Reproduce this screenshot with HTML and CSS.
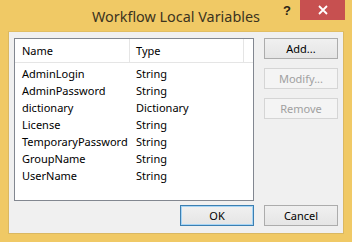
FILE: index.html
```html
<!DOCTYPE html>
<html lang="en">
<head>
    <meta charset="UTF-8">
    <title>Workflow Local Variables</title>
    <link rel="stylesheet" href="styles.css">
</head>
<body>
    <div class="window">
        <div class="titlebar">
            <div class="title">Workflow Local Variables</div>
            <div class="title-buttons">
                <span class="help">?</span>
                <span class="close">
                    <svg width="10" height="10" viewBox="0 0 10 10"><path d="M1 1 L9 9 M9 1 L1 9" stroke="#fff" stroke-width="1.8"/></svg>
                </span>
            </div>
        </div>
        <div class="client">
            <div class="listview">
                <div class="lv-header">
                    <div class="col-name">Name</div>
                    <div class="col-type">Type</div>
                    <div class="col-rest"></div>
                </div>
                <div class="lv-rows">
                    <div class="lv-row"><div class="col-name">AdminLogin</div><div class="col-type">String</div></div>
                    <div class="lv-row"><div class="col-name">AdminPassword</div><div class="col-type">String</div></div>
                    <div class="lv-row"><div class="col-name">dictionary</div><div class="col-type">Dictionary</div></div>
                    <div class="lv-row"><div class="col-name">License</div><div class="col-type">String</div></div>
                    <div class="lv-row"><div class="col-name">TemporaryPassword</div><div class="col-type">String</div></div>
                    <div class="lv-row"><div class="col-name">GroupName</div><div class="col-type">String</div></div>
                    <div class="lv-row"><div class="col-name">UserName</div><div class="col-type">String</div></div>
                </div>
            </div>
            <div class="side-buttons">
                <button class="btn">Add...</button>
                <button class="btn" disabled>Modify...</button>
                <button class="btn" disabled>Remove</button>
            </div>
            <button class="btn default ok">OK</button>
            <button class="btn">Cancel</button>
        </div>
    </div>
</body>
</html>
```
FILE: styles.css
```css
* { box-sizing: border-box; }
body { margin: 0; font-family: "Noto Sans", "Open Sans", sans-serif; }
.window { width: 352px; height: 242px; background-color: #f0c965; padding: 0 8px 8px; display: flex; flex-direction: column; }
.titlebar { height: 31px; position: relative; }
.title { text-align: center; font-size: 14.4px; color: #3c3320; line-height: 31px; padding-top: 1px; }
.title-buttons { position: absolute; top: 0; right: -1px; display: flex; align-items: flex-start; }
.help { font-family: "Liberation Sans", sans-serif; font-weight: bold; font-size: 13px; color: #2b2416; width: 26px; text-align: center; line-height: 22px; }
.close { width: 45px; height: 20px; background-color: #c75050; display: flex; align-items: center; justify-content: center; }

.client { flex: 1; background-color: #f0f0f0; border: 1px solid #dab862; border-top-color: #e2be62; display: grid; grid-template-columns: 240px 74px; grid-template-rows: 163px 21px; column-gap: 10px; row-gap: 4px; padding: 6px 6px 0 5px; align-content: start; }

.listview { background-color: #fff; border: 1px solid #828790; font-size: 11px; color: #000; }
.lv-header { display: flex; height: 24px; border-bottom: 1px solid #e5e5e5; }
.lv-header > div { line-height: 24px; border-right: 1px solid #e5e5e5; }
.lv-header .col-rest { flex: 1; border-right: none; }
.col-name { width: 115px; padding-left: 7px; flex-shrink: 0; }
.col-type { width: 114px; padding-left: 6px; flex-shrink: 0; }
.lv-rows { padding-top: 2px; }
.lv-row { display: flex; height: 17px; line-height: 17px; }

.side-buttons { display: flex; flex-direction: column; gap: 9px; }
.btn { font-family: inherit; font-size: 11px; height: 21px; padding: 0; background: linear-gradient(#f0f0f0, #e5e5e5); border: 1px solid #acacac; color: #000; }
.btn:disabled { background: #f4f4f4; border-color: #d5d5d5; color: #a0a0a0; }
.default { border-color: #3c7fb1; box-shadow: inset 0 0 0 1px #a6d5f6; }
.ok { justify-self: end; width: 74px; }
```
